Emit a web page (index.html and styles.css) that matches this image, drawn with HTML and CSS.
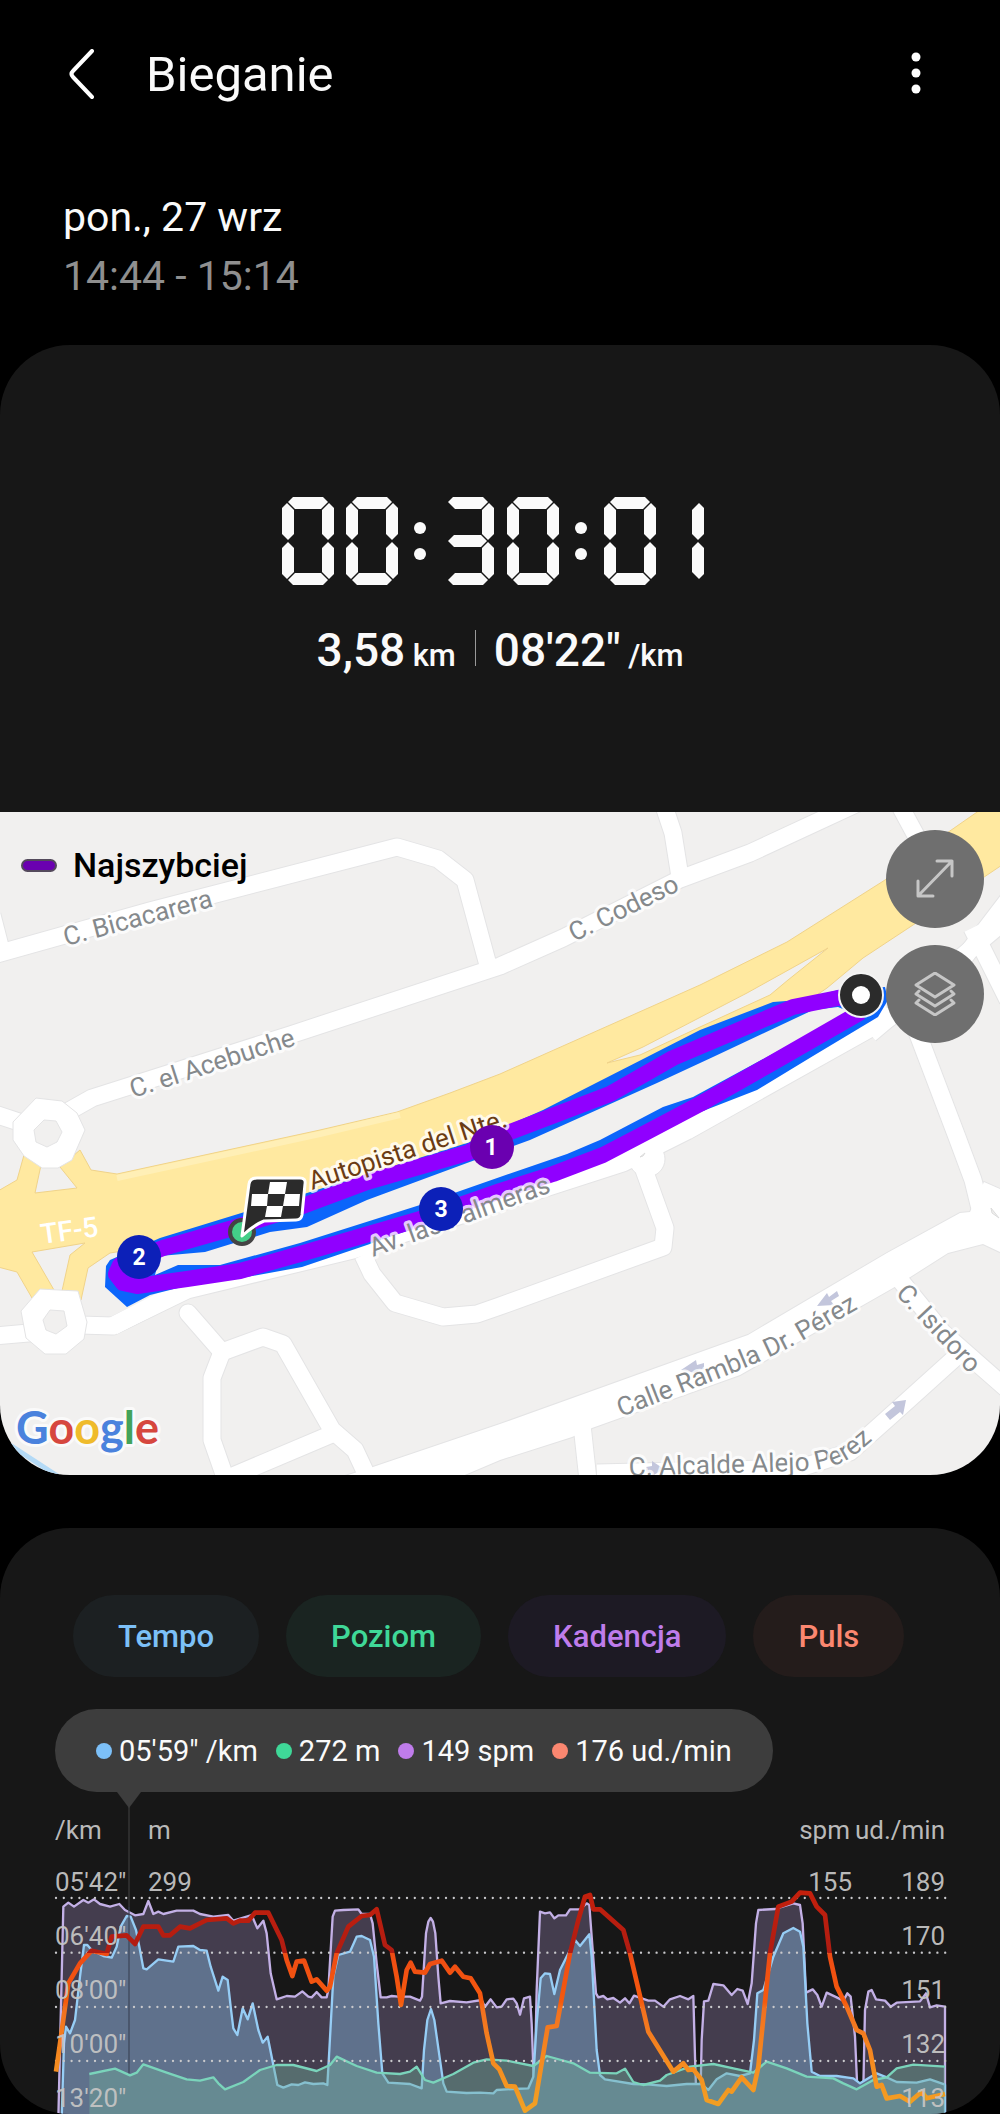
FILE: index.html
```html
<!DOCTYPE html>
<html lang="pl">
<head>
<meta charset="utf-8">
<meta name="viewport" content="width=device-width, initial-scale=1">
<title>Bieganie</title>
<link rel="stylesheet" href="styles.css">
</head>
<body>

<header class="topbar">
  <button class="icon-btn" type="button" aria-label="Wstecz">
    <svg width="30" height="52" viewBox="0 0 30 52"><path d="M28 2 L9 22 Q6 25 9 28 L28 48" fill="none" stroke="#fff" stroke-width="4" stroke-linecap="round"/></svg>
  </button>
  <h1>Bieganie</h1>
  <button class="icon-btn more" type="button" aria-label="Więcej opcji">
    <svg width="12" height="48" viewBox="0 0 12 48" fill="#fff"><circle cx="6" cy="6" r="4.5"/><circle cx="6" cy="22" r="4.5"/><circle cx="6" cy="38" r="4.5"/></svg>
  </button>
</header>

<div class="date">
  <p>pon., 27 wrz</p>
  <p class="hours">14:44 - 15:14</p>
</div>

<main>
<section class="card">
  <div class="summary">
    <!-- seven segment display -->
    <svg class="timer" width="436" height="88" viewBox="0 0 436 88" role="img" aria-label="00:30:01">
      <defs>
        <path id="sa" d="M6 5 L11 0 H41 L46 5 L39 12 H13Z"/>
        <path id="sg" d="M6 44 L12 38 H39 L45 44 L39 50 H12Z"/>
        <path id="sd" d="M6 83 L11 88 H41 L46 83 L39 76 H13Z"/>
        <path id="sf" d="M5 6 L0 11 V37 L6 43 L12 37 V13Z"/>
        <path id="se" d="M5 82 L0 77 V51 L6 45 L12 51 V75Z"/>
        <path id="sb" d="M47 6 L52 11 V37 L46 43 L40 37 V13Z"/>
        <path id="sc" d="M47 82 L52 77 V51 L46 45 L40 51 V75Z"/>
        <g id="zero"><use href="#sa"/><use href="#sb"/><use href="#sc"/><use href="#sd"/><use href="#se"/><use href="#sf"/></g>
        <g id="colon"><circle cx="6" cy="31" r="6"/><circle cx="6" cy="57" r="6"/></g>
      </defs>
      <g fill="#fafafa">
        <use href="#zero"/>
        <use href="#zero" x="64"/>
        <use href="#colon" x="132"/>
        <g transform="translate(160 0)"><use href="#sa"/><use href="#sb"/><use href="#sg"/><use href="#sc"/><use href="#sd"/></g>
        <use href="#zero" x="225"/>
        <use href="#colon" x="293"/>
        <use href="#zero" x="322"/>
        <g transform="translate(370 0)"><use href="#sb"/><use href="#sc"/></g>
      </g>
    </svg>
    <div class="stats">
      <span class="stat">3,58 <small>km</small></span>
      <span class="stat">08'22" <small>/km</small></span>
    </div>
  </div>

  <div class="map">
    <svg class="map-canvas" viewBox="0 812 1000 663">
      <defs>
        <g id="roads" fill="none" stroke-linejoin="round">
          <path d="M-8 915 L0 946"/>
          <path d="M-10 956 L150 911 L397 847 L438 859 L465 880 L488 965"/>
          <path d="M60 1116 L92 1098 L290 1035 L500 966 L563 938 L680 879 L750 853 L860 802"/>
          <path d="M664 806 L673 833 L680 877"/>
          <path d="M900 806 L940 880"/>
          <path d="M-8 1113 L25 1124"/>
          <path d="M-5 1336 L40 1332"/>
          <path d="M80 1325 L113 1326 L187 1290 L353 1250 L623 1163 L687 1131 L889 1018 L960 963 L1008 900"/>
          <path d="M870 1034 L1008 918"/>
          <path d="M905 1000 L957 1137 L973 1180 L984 1225"/>
          <path d="M972 928 L1008 1000"/>
          <path d="M643 1167 L665 1228 L663 1247 L500 1306 L477 1314 L443 1317 L395 1303 L372 1274 L363 1255"/>
          <path d="M188 1313 L222 1352 L263 1337 L283 1344 L332 1430 L355 1450 L369 1480" stroke-linecap="round"/>
          <path d="M222 1352 L212 1378 V1440 L226 1480"/>
          <path d="M228 1478 L332 1434"/>
          <path d="M900 1280 L943 1333 L1008 1390"/>
          <path d="M957 1356 L886 1420 L850 1452 L800 1468 L597 1473"/>
          <path d="M582 1425 L588 1480"/>
          <path d="M975 1190 L1008 1215"/>
        </g>
        <path id="rambla" d="M345 1476 L370 1468 L500 1424 L748 1335 L887 1253 L960 1213 L970 1212 L984 1182 L1002 1190 V1253 L983 1244 L948 1253 L893 1288 L740 1375 L592 1428 L572 1437 L500 1460 L460 1477Z"/>
        <path id="p-rambla" d="M621 1417 L700 1386 Q770 1359 800 1342 L880 1296"/>
        <path id="p-alejo" d="M629 1476 L800 1471 Q838 1470 860 1451 L900 1417"/>
      </defs>

      <rect y="812" width="1000" height="663" fill="#f1f0ef"/>
      <path d="M10 1445 L62 1479" stroke="#b4daf6" stroke-width="5"/>

      <use href="#roads" stroke="#e4e4e5" stroke-width="19"/>
      <use href="#rambla" fill="#fff" stroke="#e4e4e5" stroke-width="2"/>
      <circle cx="647" cy="1159" r="18" fill="#fff" stroke="#e4e4e5"/>
      <!-- motorway and its ramps -->
      <g fill="#ffe9a0" stroke="#f0d38a" stroke-width="1">
        <path d="M-2 1191 L17 1180 L24 1155 L41 1165 L35 1193 L77 1188 L60 1167 L80 1150 L91 1170 L117 1174 L320 1130 L397 1112 L450 1093 L500 1074 L700 985 L787 942 L885 880 L947 833 L980 810 H1002 V865 L913 925 L863 958 L827 988 L780 1020 L500 1140 L160 1245 L110 1253 L88 1268 L81 1300 L62 1291 L70 1255 L85 1243 L32 1252 L54 1290 L32 1298 L17 1272 L-2 1267Z"/>
        <path d="M828 948 L747 993 L643 1047 L607 1063 L640 1055 L700 1027 L770 995 L788 980Z" fill="#f1f0ef"/>
      </g>
      <path d="M117 1178 L320 1134 L400 1115" fill="none" stroke="#ffefb6" stroke-width="6"/>
      <use href="#roads" stroke="#fff" stroke-width="17"/>
      <use href="#rambla" fill="#fff"/>
      <path d="M113 1326 L187 1288 L353 1243 L623 1157 L687 1125 L889 1012" fill="none" stroke="#fff" stroke-width="18"/>
      <path d="M999 1218 L991 1208 L992 1213Z M640 1157 L645 1153 L643 1156Z" fill="#f1f0ef" stroke="#dcdcdc"/>
      <path d="M36 1098 L62 1101 L77 1113 L85 1130 L72 1160 L58 1168 L42 1168 L24 1156 L13 1140 V1122Z M44 1120 L34 1130 L36 1142 L47 1147 L57 1142 L62 1132 L56 1121Z" fill="#fff" fill-rule="evenodd" stroke="#e4e4e5"/>
      <path d="M40 1289 L78 1291 L87 1322 L84 1339 L66 1354 L45 1354 L26 1338 L21 1311Z M50 1310 L43 1320 L46 1330 L56 1334 L67 1326 L64 1311Z" fill="#fff" fill-rule="evenodd" stroke="#e4e4e5"/>

      <!-- recorded route -->
      <path fill="#0b65fb" fill-rule="evenodd" d="M838 990 L800 1000 L773 1002 L700 1030 L543 1110 L467 1143 L307 1193 L160 1238 L110 1260 L106 1266 L105 1287 L127 1307 L150 1295 L190 1285 L247 1277 L302 1267 L367 1245 L500 1198 L603 1162 L667 1125 L757 1090 L813 1056 L878 1017 L888 1000 L885 987Z
        M850 1012 L838 1007 L813 1010 L713 1057 L657 1083 L530 1140 L467 1163 L367 1200 L307 1227 L270 1232 L205 1252 L160 1256 L155 1275 L178 1265 L220 1265 L300 1243 L420 1205 L500 1177 L567 1154 L600 1140 L663 1107 L693 1097Z"/>
      <path fill="none" stroke="#9000ff" stroke-width="16" stroke-linejoin="round" d="M861 995 L838 998 L793 1007 L673 1058 L610 1094 L510 1132 L467 1153 L367 1182 L300 1207 L233 1228 L163 1248 L120 1265 L116 1274 L123 1283 L137 1286 L187 1279 L240 1271 L300 1254 L417 1220 L500 1191 L553 1174 L603 1155 L647 1132 L700 1104 L767 1066 L861 1012"/>

      <g fill="#c3c6dc">
        <path d="M681 1370 L696 1360 L697 1365 L704 1363 V1369 L698 1370 L700 1374Z"/>
        <path d="M817 1306 L827 1293 L829 1297 L837 1291 L839 1296 L831 1301 L834 1305Z"/>
        <path d="M906 1400 L903 1415 L900 1412 L890 1420 L885 1414 L895 1406 L892 1402Z"/>
        <path d="M664 1469 L652 1461 V1466 L646 1467 V1472 L652 1473 V1476Z"/>
      </g>

      <g class="street">
        <text transform="translate(66 946) rotate(-15)">C. Bicacarera</text>
        <text transform="translate(133 1098) rotate(-18)">C. el Acebuche</text>
        <text transform="translate(574 942) rotate(-26)">C. Codeso</text>
        <text transform="translate(373 1257) rotate(-20)">Av. las Palmeras</text>
        <text transform="translate(895 1294) rotate(47)">C. Isidoro</text>
        <text><textPath href="#p-rambla">Calle Rambla Dr. Pérez</textPath></text>
        <text><textPath href="#p-alejo">C. Alcalde Alejo Perez</textPath></text>
        <text class="motorway" transform="translate(312 1190) rotate(-18)">Autopista del Nte.</text>
      </g>
      <text class="road-no" transform="translate(42 1244) rotate(-8)">TF-5</text>

      <!-- markers -->
      <g class="km">
        <circle cx="492" cy="1147" r="22" fill="#6a00b0"/><text x="491" y="1155">1</text>
        <circle cx="139" cy="1257" r="22" fill="#0c20b8"/><text x="139" y="1265">2</text>
        <circle cx="441" cy="1209" r="22" fill="#0c20b8"/><text x="441" y="1217">3</text>
      </g>
      <circle cx="861" cy="995" r="22" fill="#2b2b2b" stroke="#f4f4f4" stroke-width="2"/>
      <circle cx="861" cy="995" r="9" fill="#fff"/>
      <circle cx="242" cy="1232" r="12" fill="#43cf88" stroke="#444" stroke-width="4"/>
      <path d="M257 1178 H300 Q306 1178 305 1184 L302 1215 Q301 1220 296 1220 L264 1221 Q254 1225 242 1236 L249 1184 Q250 1178 257 1178Z" fill="#2b2b2b" stroke="#fff" stroke-width="3" stroke-linejoin="round"/>
      <path d="M270 1182 H287 L285 1194 H300 L299 1206 H283 L281 1217 H265 L267 1206 H251 L252 1194 H268Z M268 1194 L267 1206 H283 L285 1194Z" fill="#fff" fill-rule="evenodd"/>

      <text class="google" x="16" y="1444"><tspan fill="#4a82dd">G</tspan><tspan fill="#d6473e">o</tspan><tspan fill="#efbb2b">o</tspan><tspan fill="#4a82dd">g</tspan><tspan fill="#43a35a">l</tspan><tspan fill="#d6473e">e</tspan></text>
    </svg>

    <div class="legend"><i></i>Najszybciej</div>
    <div class="map-tools">
      <button type="button" aria-label="Pełny ekran">
        <svg width="42" height="42" viewBox="0 0 42 42"><path d="M23 3 H38 V18 M38 3 L4 38 M4 23 V38 H19"/></svg>
      </button>
      <button type="button" aria-label="Warstwy">
        <svg width="42" height="44" viewBox="0 0 42 44"><path d="M21 1 L40 13 L21 25 L2 13Z M5 19 L2 22 L21 34 L40 22 L37 19 M5 28 L2 31 L21 43 L40 31 L37 28"/></svg>
      </button>
    </div>
  </div>
</section>

<section class="card charts">
  <div class="chips">
    <button class="chip pace" type="button">Tempo</button>
    <button class="chip level" type="button">Poziom</button>
    <button class="chip cadence" type="button">Kadencja</button>
    <button class="chip pulse" type="button">Puls</button>
  </div>
  <div class="tooltip">
    <span class="pace">05'59" /km</span>
    <span class="level">272 m</span>
    <span class="cadence">149 spm</span>
    <span class="pulse">176 ud./min</span>
  </div>

  <svg class="chart" viewBox="0 2 1000 322">
    <svg width="1000" height="324" viewBox="0 0 3000 972">
      <defs>
        <linearGradient id="hr" gradientUnits="userSpaceOnUse" x1="0" y1="300" x2="0" y2="972">
          <stop offset="0" stop-color="#c4200c"/>
          <stop offset=".28" stop-color="#b01c12"/>
          <stop offset=".28" stop-color="#ee4b14"/>
          <stop offset=".5" stop-color="#f65a0d"/>
          <stop offset=".53" stop-color="#f2701f"/>
          <stop offset=".76" stop-color="#f58a1f"/>
          <stop offset="1" stop-color="#f2a324"/>
        </linearGradient>
      </defs>
      <g stroke-width="7" stroke-linejoin="round">
        <path fill="#443d4e" stroke="#c3b0e6" d="M175 985 L190 350 L205 338 L222 350 L250 330 L265 338 L282 328 L300 342 L330 350 L358 342 L375 360 L405 376 L430 372 L445 333 L460 372 L475 365 L490 372 L530 362 L580 362 L600 372 L640 380 L685 375 L700 392 L755 375 L772 415 L790 392 L800 430 L812 550 L830 628 L860 618 L885 620 L907 604 L925 620 L935 622 L950 606 L965 622 L980 622 L985 600 L998 380 L1005 362 L1030 360 L1075 358 L1085 372 L1110 372 L1118 400 L1130 520 L1142 622 L1160 622 L1175 618 L1195 620 L1230 620 L1260 632 L1266 620 L1278 430 L1285 395 L1292 384 L1299 395 L1306 430 L1315 560 L1322 640 L1350 633 L1400 637 L1445 630 L1455 650 L1472 628 L1490 652 L1505 650 L1520 628 L1540 626 L1550 640 L1560 674 L1572 625 L1590 620 L1595 700 L1603 910 L1610 600 L1620 365 L1635 370 L1650 367 L1663 385 L1675 376 L1698 376 L1710 358 L1740 358 L1760 340 L1768 345 L1775 440 L1788 610 L1795 622 L1810 618 L1822 628 L1840 624 L1860 638 L1875 625 L1888 640 L1902 617 L1945 632 L1965 632 L1990 650 L2010 628 L2040 618 L2065 628 L2080 618 L2085 800 L2091 985 H2100 L2105 750 L2112 634 L2125 632 L2140 582 L2170 586 L2195 615 L2212 597 L2228 602 L2243 642 L2255 580 L2268 400 L2275 360 L2325 357 L2380 340 L2400 345 L2408 400 L2418 608 L2438 598 L2452 615 L2465 650 L2480 608 L2510 622 L2530 632 L2542 610 L2552 620 L2565 740 L2576 985 H2588 L2595 660 L2605 605 L2615 600 L2628 628 L2655 632 L2672 650 L2690 638 L2760 634 L2778 610 L2790 652 L2810 646 L2835 650 V985"/>
        <path fill="#5f718c" stroke="#96cdf5" d="M185 985 L192 760 L198 710 L210 730 L225 690 L240 560 L252 465 L262 465 L275 480 L310 498 L335 503 L350 470 L362 410 L380 378 L392 380 L408 420 L418 470 L430 535 L440 538 L475 508 L520 515 L535 470 L580 468 L600 480 L620 482 L632 530 L655 602 L668 560 L683 570 L692 650 L700 715 L712 735 L728 655 L743 688 L758 640 L775 720 L788 758 L803 740 L815 800 L832 885 L850 893 L875 883 L895 885 L915 877 L940 882 L970 880 L982 885 L988 780 L1000 560 L1015 495 L1050 485 L1070 440 L1085 438 L1110 450 L1122 500 L1135 700 L1147 850 L1165 878 L1230 882 L1265 895 L1272 780 L1282 690 L1293 657 L1303 690 L1330 880 L1340 905 L1400 909 L1440 908 L1480 910 L1490 900 L1540 897 L1585 895 L1600 860 L1610 700 L1622 565 L1635 550 L1650 552 L1663 612 L1680 540 L1710 480 L1725 450 L1740 468 L1768 433 L1775 500 L1790 780 L1800 855 L1815 868 L1900 882 L1950 884 L2000 888 L2060 882 L2105 882 L2125 900 L2150 868 L2180 850 L2220 858 L2250 850 L2262 750 L2272 610 L2290 600 L2320 500 L2350 430 L2380 414 L2400 425 L2410 470 L2422 700 L2435 845 L2460 858 L2510 858 L2560 865 L2580 880 L2630 850 L2660 862 L2690 876 L2750 878 L2790 868 L2835 884 V985"/>
        <path fill="#6fae9a" fill-opacity=".42" d="M268 985 V852 L345 836 L390 856 L410 848 L430 823 L500 848 L560 868 L600 872 L640 862 L655 880 L675 898 L730 876 L780 840 L830 825 L880 825 L950 843 L990 825 L1010 800 L1070 828 L1130 848 L1200 852 L1230 845 L1250 830 L1275 870 L1300 878 L1360 852 L1420 818 L1460 808 L1520 812 L1600 828 L1640 798 L1720 820 L1770 848 L1850 850 L1875 836 L1900 876 L1930 885 L1980 872 L2000 855 L2070 830 L2140 822 L2200 835 L2260 848 L2300 815 L2360 835 L2420 860 L2500 865 L2530 880 L2570 898 L2620 870 L2660 862 L2690 835 L2740 824 L2835 830 V985"/>
        <path fill="none" stroke="#7ad4bb" d="M268 852 L345 836 L390 856 L410 848 L430 823 L500 848 L560 868 L600 872 L640 862 L655 880 L675 898 L730 876 L780 840 L830 825 L880 825 L950 843 L990 825 L1010 800 L1070 828 L1130 848 L1200 852 L1230 845 L1250 830 L1275 870 L1300 878 L1360 852 L1420 818 L1460 808 L1520 812 L1600 828 L1640 798 L1720 820 L1770 848 L1850 850 L1875 836 L1900 876 L1930 885 L1980 872 L2000 855 L2070 830 L2140 822 L2200 835 L2260 848 L2300 815 L2360 835 L2420 860 L2500 865 L2530 880 L2570 898 L2620 870 L2660 862 L2690 835 L2740 824 L2835 830"/>
      </g>
      <path d="M387 45 V350" stroke="#fff" stroke-opacity=".12" stroke-width="5"/>
      <path d="M387 350 V850" stroke="#3a4356" stroke-opacity=".7" stroke-width="5"/>
      <path d="M168 324 H2838 M168 488 H2838 M168 651 H2838 M168 813 H2838" stroke="#c9c9cc" stroke-width="7" stroke-linecap="round" stroke-dasharray="0 23.4"/>
      <path fill="none" stroke="url(#hr)" stroke-width="14" stroke-linejoin="round" d="M168 845 L180 760 L205 580 L240 520 L275 482 L320 492 L335 440 L380 436 L405 462 L430 410 L475 410 L490 436 L510 436 L540 410 L570 415 L620 390 L680 385 L700 400 L720 392 L745 392 L765 368 L805 368 L845 450 L860 510 L877 558 L890 515 L912 512 L935 575 L950 568 L980 602 L990 590 L1010 490 L1045 410 L1085 378 L1110 375 L1130 358 L1155 465 L1175 480 L1190 560 L1203 645 L1220 540 L1232 518 L1245 545 L1275 548 L1290 522 L1325 512 L1350 548 L1365 530 L1390 560 L1412 565 L1440 610 L1460 730 L1480 820 L1498 838 L1520 888 L1545 890 L1575 962 L1605 940 L1625 820 L1643 712 L1670 708 L1710 490 L1735 390 L1755 320 L1770 315 L1780 358 L1800 358 L1870 420 L1890 490 L1945 725 L2020 845 L2050 820 L2065 840 L2080 838 L2105 870 L2120 930 L2155 942 L2185 900 L2195 905 L2225 862 L2260 900 L2275 830 L2310 490 L2335 350 L2375 335 L2400 308 L2430 310 L2450 350 L2475 375 L2490 500 L2510 590 L2540 650 L2570 720 L2590 730 L2610 780 L2630 890 L2645 885 L2660 925 L2700 918 L2730 935 L2765 905 L2780 925 L2835 912"/>
    </svg>
    <g class="axis">
      <text x="55" y="49">/km</text>
      <text x="55" y="101">05'42"</text>
      <text x="55" y="155">06'40"</text>
      <text x="55" y="209">08'00"</text>
      <text x="55" y="263">10'00"</text>
      <text x="55" y="317">13'20"</text>
      <text x="148" y="49">m</text>
      <text x="148" y="101">299</text>
    </g>
    <g class="axis right">
      <text x="850" y="49">spm</text>
      <text x="852" y="101">155</text>
      <text x="945" y="49">ud./min</text>
      <text x="945" y="101">189</text>
      <text x="945" y="155">170</text>
      <text x="945" y="209">151</text>
      <text x="945" y="263">132</text>
      <text x="945" y="317">113</text>
    </g>
  </svg>
</section>
</main>

</body>
</html>
```

FILE: styles.css
```css
body {
    background-color: #000;
    color: #fafafa;
    font-family: Roboto, sans-serif;
    margin: 0;
}

h1, p {
    font-weight: normal;
    margin: 0;
}

button {
    border: none;
    font-family: inherit;
    padding: 0;
}

svg {
    display: block;
}

.topbar {
    align-items: center;
    display: flex;
    gap: 52px;
    padding: 45px 64px 0;
}

.topbar h1 {
    flex: 1;
    font-size: 49px;
    line-height: 60px;
}

.icon-btn {
    background: none;
    height: 60px;
}

.icon-btn.more {
    padding: 0 14px;
}

.date {
    font-size: 41px;
    line-height: 59px;
    padding: 83px 63px 39px;
}

.date .hours {
    color: #8f8f8f;
}

.card {
    background-color: #171717;
    border-radius: 70px;
    overflow: hidden;
}

.summary {
    align-items: center;
    display: flex;
    flex-direction: column;
    gap: 37px;
    padding: 152px 24px 128px;
}

.stats {
    align-items: center;
    display: flex;
    font-size: 46px;
    font-weight: 500;
    line-height: 56px;
}

.stats small {
    font-size: 31px;
    margin-left: -4px;
}

.stat + .stat {
    background: linear-gradient(#999, #999) left 8px / 1px 36px no-repeat;
    margin-left: 19px;
    padding-left: 19px;
}

.map {
    position: relative;
}

.map-canvas {
    height: auto;
    width: 100%;
}

.street text {
    fill: #85898c;
    font-size: 26px;
    paint-order: stroke;
    stroke: rgba(255, 255, 255, 0.8);
    stroke-linejoin: round;
    stroke-width: 6px;
}

.street .motorway {
    fill: #6b3c14;
}

.road-no {
    fill: #fff;
    font-size: 28px;
    font-weight: 500;
}

.km text {
    fill: #fff;
    font-size: 23px;
    font-weight: 700;
    text-anchor: middle;
}

.google {
    font-family: Lato, sans-serif;
    font-size: 45px;
    font-weight: 700;
    paint-order: stroke;
    stroke: #fafafa;
    stroke-linejoin: round;
    stroke-width: 6px;
}

.legend {
    align-items: center;
    color: #000;
    display: flex;
    font-size: 34px;
    font-weight: 500;
    gap: 16px;
    left: 21px;
    line-height: 40px;
    position: absolute;
    top: 33px;
}

.legend i {
    background-color: #6a00b0;
    border: 2px solid #544a5c;
    border-radius: 7px;
    height: 9px;
    width: 32px;
}

.map-tools {
    display: flex;
    flex-direction: column;
    gap: 17px;
    position: absolute;
    right: 16px;
    top: 18px;
}

.map-tools button {
    background-color: #6f6f6f;
    border-radius: 50%;
    height: 98px;
    width: 98px;
}

.map-tools svg {
    fill: none;
    margin: 0 auto;
    stroke: #c6c6c6;
    stroke-linecap: round;
    stroke-linejoin: round;
    stroke-width: 3px;
}

.charts {
    margin-top: 53px;
    padding-top: 67px;
}

.pace { color: #7cc0f8; }
.level { color: #3fd898; }
.cadence { color: #bf7ceb; }
.pulse { color: #fb8770; }

.chips {
    display: flex;
    flex-wrap: wrap;
    gap: 27px;
    padding: 0 73px;
}

.chip {
    border-radius: 41px;
    font-size: 31px;
    font-weight: 500;
    height: 82px;
    padding: 0 45px;
}

.chip.pace { background-color: #1c2022; }
.chip.level { background-color: #1a2421; }
.chip.cadence { background-color: #1d1a24; }
.chip.pulse { background-color: #241c1b; }

.tooltip {
    align-items: center;
    background-color: #3d3d3d;
    border-radius: 42px;
    display: flex;
    gap: 18px;
    height: 83px;
    margin: 32px 55px 0;
    padding: 0 41px;
    position: relative;
    width: fit-content;
}

.tooltip::after {
    border: 12px solid transparent;
    border-bottom: none;
    border-top: 16px solid #3d3d3d;
    content: "";
    left: 62px;
    position: absolute;
    top: 100%;
}

.tooltip span {
    align-items: center;
    display: flex;
    font-size: 29px;
    gap: 7px;
    -webkit-text-fill-color: #fafafa;
}

.tooltip span::before {
    background-color: currentColor;
    border-radius: 50%;
    content: "";
    height: 16px;
    width: 16px;
}

.chart {
    height: auto;
    width: 100%;
}

.axis text {
    fill: #c4c4c4;
    fill-opacity: 0.95;
    font-size: 26px;
}

.axis.right text {
    text-anchor: end;
}
```
